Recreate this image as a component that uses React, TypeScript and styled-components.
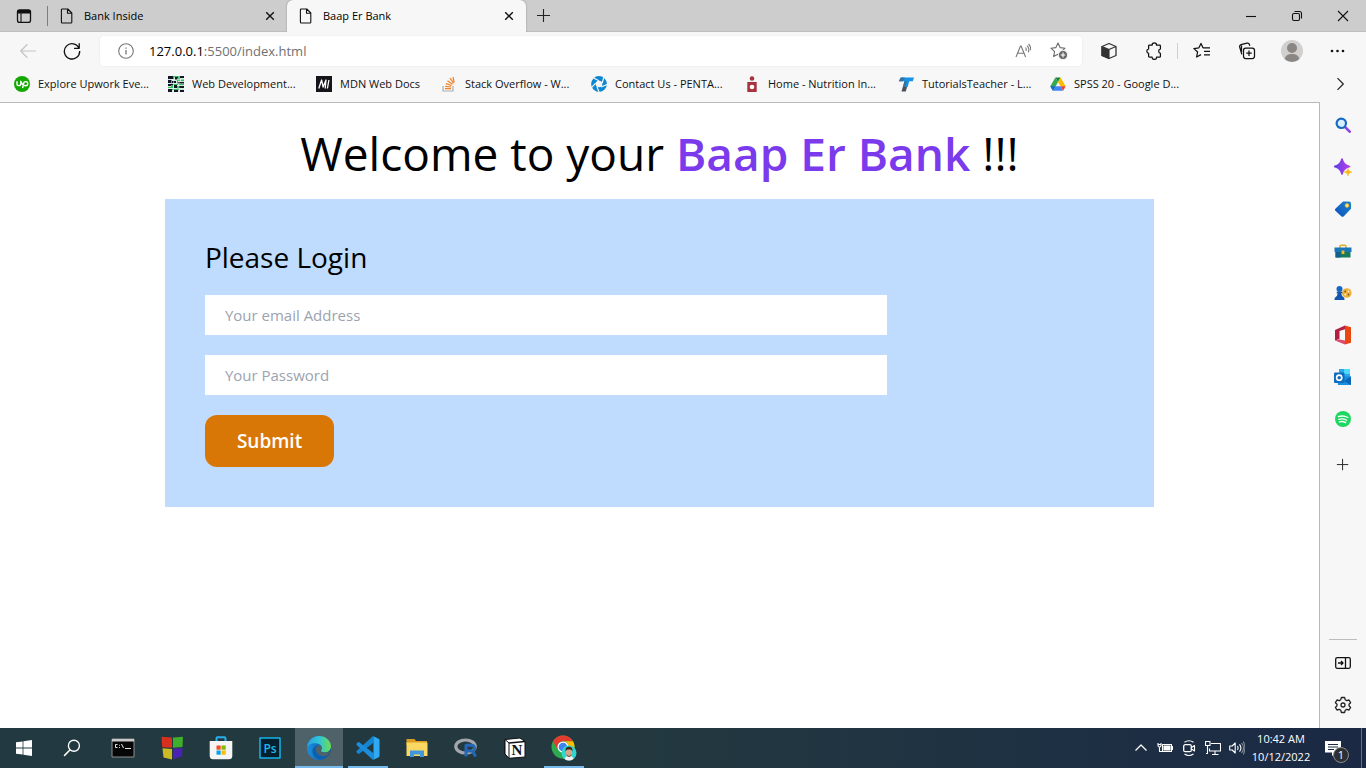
import React, { ReactNode } from "react";
import styled, { createGlobalStyle, css } from "styled-components";

const GlobalStyle = createGlobalStyle`
  *, *::before, *::after { box-sizing: border-box; }
  body {
    margin: 0;
    font-family: "Open Sans", "Noto Sans", sans-serif;
    color: #000;
    background: #fff;
  }
  button, input { font-family: inherit; }
  button { border: 0; padding: 0; background: none; color: inherit; }
  h1, h2, p { margin: 0; font-weight: 400; }
  svg { display: block; flex: none; }
`;

/* ---------- layout ---------- */

const Desktop = styled.div`
  display: flex;
  flex-direction: column;
  min-height: 100vh;
  background: #f7f7f7;
`;

const Body = styled.div`
  display: flex;
  flex: 1;
`;

const Spacer = styled.div`
  flex: 1;
`;

/* ---------- tab strip ---------- */

const TabStrip = styled.header`
  display: flex;
  align-items: stretch;
  height: 32px;
  background: #cdcdcd;
  box-shadow: inset 0 -1px 0 #bdbdbd;
`;

const TabActions = styled.button`
  display: flex;
  align-items: center;
  justify-content: center;
  width: 47px;
`;

const TabDivider = styled.span`
  align-self: center;
  width: 1px;
  height: 20px;
  background: #7d7d7d;
`;

const Tab = styled.div<{ $active?: boolean }>`
  display: flex;
  align-items: center;
  gap: 9px;
  width: 239px;
  padding: 0 9px 0 11px;
  font-size: 11px;
  line-height: 16px;
  ${(p) =>
    p.$active &&
    css`
      background: #f7f7f7;
      border-radius: 6px 6px 0 0;
      box-shadow: 0 0 2px #8a8a8a;
      clip-path: inset(0 -3px 0 -3px);
    `}
`;

const TabTitle = styled.span`
  flex: 1;
  white-space: nowrap;
`;

const IconButton = styled.button<{ $w: number }>`
  display: flex;
  align-items: center;
  justify-content: center;
  flex: none;
  width: ${(p) => p.$w}px;
`;

/* ---------- toolbar ---------- */

const Toolbar = styled.nav`
  display: flex;
  align-items: stretch;
  height: 34px;
  padding: 4px 6px 0;
`;

const AddressBar = styled.div`
  display: flex;
  align-items: center;
  flex: 1;
  margin: 0 5px 0 6px;
  padding: 0 5px 0 18px;
  background: #fff;
  border-radius: 4px;
  box-shadow: 0 0 2px #e2e2e2;
  font-size: 13px;
  line-height: 18px;
`;

const Url = styled.p`
  flex: 1;
  margin-left: 15px;
  color: #717171;
  strong { font-weight: 400; color: #000; }
`;

const ToolbarDivider = styled.span`
  align-self: center;
  width: 1px;
  height: 16px;
  margin: 0 1px;
  background: #cfcfcf;
`;

/* ---------- bookmarks ---------- */

const BookmarksBar = styled.nav`
  display: flex;
  align-items: center;
  height: 36px;
  padding: 0 14px;
`;

const Bookmark = styled.a<{ $w: number }>`
  display: flex;
  align-items: center;
  gap: 8px;
  flex: none;
  width: ${(p) => p.$w}px;
  color: #111;
  font-size: 11px;
  line-height: 16px;
  text-decoration: none;
  white-space: nowrap;
`;

/* ---------- web page ---------- */

const Page = styled.main`
  flex: 1;
  background: #fff;
  border-top: 1px solid #b9b9b9;
  border-right: 1px solid #b9b9b9;
`;

const Welcome = styled.h1`
  padding: 26px 0 22px;
  font-size: 46px;
  line-height: 48px;
  text-align: center;
  strong { font-weight: 600; color: #7c3aed; }
`;

const LoginForm = styled.form`
  display: flex;
  flex-direction: column;
  align-items: flex-start;
  gap: 20px;
  width: 75%;
  margin: 0 auto;
  padding: 40px;
  background: #bfdbfe;
`;

const FormTitle = styled.h2`
  font-size: 28px;
  line-height: 36px;
`;

const Field = styled.input`
  width: 75%;
  height: 40px;
  padding: 0 20px;
  border: 0;
  background: #fff;
  font-size: 15px;
  &::placeholder { color: #9ca3af; opacity: 1; }
`;

const Submit = styled.button`
  padding: 12px 32px;
  border-radius: 12px;
  background: #d97706;
  color: #fff;
  font-size: 19px;
  line-height: 28px;
  font-weight: 600;
`;

/* ---------- sidebar ---------- */

const Sidebar = styled.aside`
  display: flex;
  flex-direction: column;
  width: 46px;
  padding: 2px 0;
`;

const SideButton = styled.button`
  display: flex;
  align-items: center;
  justify-content: center;
  height: 42px;
`;

const SideGap = styled.div`
  height: 4px;
`;

const SideRule = styled.hr`
  width: 28px;
  height: 1px;
  margin: 0 auto 2px;
  border: 0;
  background: #bcbcbc;
`;

/* ---------- taskbar ---------- */

const Taskbar = styled.footer`
  display: flex;
  align-items: stretch;
  height: 40px;
  background: linear-gradient(90deg, #233941 0%, #23393f 45%, #1e3143 75%, #1b2944 100%);
  color: #fff;
`;

const TaskApps = styled.div`
  display: flex;
  gap: 1px;
  margin-left: 3px;
`;

const TaskButton = styled.button<{ $state?: "open" | "focused" }>`
  display: flex;
  align-items: center;
  justify-content: center;
  width: 48px;
  background: ${(p) => (p.$state === "focused" ? "#4f6169" : "transparent")};
  background-image: ${(p) => (p.$state ? "linear-gradient(#76b9ed, #76b9ed)" : "none")};
  background-repeat: no-repeat;
  background-position: center bottom;
  background-size: ${(p) => (p.$state === "focused" ? "48px 2px" : "40px 2px")};
`;

const Clock = styled.time`
  display: flex;
  flex-direction: column;
  align-items: center;
  justify-content: center;
  width: 64px;
  font-size: 11px;
  line-height: 18px;
  white-space: nowrap;
`;

const Notifications = styled.button`
  position: relative;
  display: flex;
  align-items: center;
  justify-content: center;
  width: 48px;
  padding-right: 8px;
  color: #fff;
`;

const Badge = styled.span`
  position: absolute;
  top: 19px;
  left: 20px;
  width: 16px;
  height: 16px;
  border: 1px solid #8c8c8c;
  border-radius: 8px;
  background: #2d2f33;
  font-size: 11px;
  line-height: 14px;
  text-align: center;
`;

const ShowDesktop = styled.button`
  width: 5px;
  border-left: 1px solid #66707f;
`;

/* ---------- icons ---------- */

type IconProps = { size?: number; box?: number; stroke?: string; children: ReactNode };

const Icon = ({ size = 16, box = 16, stroke, children }: IconProps) => (
  <svg
    width={size}
    height={size}
    viewBox={`0 0 ${box} ${box}`}
    fill="none"
    stroke={stroke}
    strokeWidth={stroke ? 1.1 : undefined}
    strokeLinejoin="round"
    aria-hidden="true"
  >
    {children}
  </svg>
);

const PageIcon = () => (
  <Icon stroke="#111">
    <path d="M3.2 1h5.6l4 4v9.2c0 .5-.3.8-.8.8H3.2a.8.8 0 0 1-.8-.8V1.8c0-.5.3-.8.8-.8zM8.5 1v4.3h4.3" />
  </Icon>
);

const CloseIcon = () => (
  <Icon stroke="#111">
    <path d="M4.2 4.2l7.6 7.6M11.8 4.200l-7.600 7.600" strokeWidth="1.4" />
  </Icon>
);

const PlusIcon = ({ size = 16 }: { size?: number }) => (
  <Icon size={size} stroke="#222">
    <path d="M7.5 1v13M1 7.500h13" />
  </Icon>
);

const TabActionsIcon = () => (
  <Icon stroke="#111">
    <rect x="1.5" y="1.8" width="13" height="12.6" rx="2.2" strokeWidth="1.3" />
    <path d="M2 2.6h12v2.400H2z" fill="#111" />
    <path d="M5 5v9" />
  </Icon>
);

const BackIcon = () => (
  <Icon size={18} stroke="#c4c4c4">
    <path d="M15 8H1.5M7.5 2L1.5 8l6 6" />
  </Icon>
);

const ReloadIcon = () => (
  <Icon size={18} stroke="#111">
    <path d="M14.2 5.5A6.8 6.8 0 1 0 14.8 8M14.4 1v4.6H9.8" strokeWidth="1.2" />
  </Icon>
);

const InfoIcon = () => (
  <Icon stroke="#777">
    <circle cx="8" cy="8" r="7.3" />
    <path d="M8 7v4.6M8 4.4v1.3" strokeWidth="1.3" />
  </Icon>
);

const ReadAloudIcon = () => (
  <Icon stroke="#777">
    <path d="M1 14L5.5 3h.6l4.5 11M2.6 10.3H9M10.5 4.5c.9 1 .9 2.4.5 3.4M12 2.6c2 1.8 2.2 4.6 1.2 6.6M13.6 1c1.7 1.8 2.3 4 2 6.2" />
  </Icon>
);

const AddFavoriteIcon = () => (
  <Icon size={18} box={18} stroke="#6a6a6a">
    <path d="M8 1l2.1 4.6 5 .6-3.700 3.400 1 5L8 12.2l-4.4 2.4 1-5L.9 6.200l5-.6z" />
    <circle cx="13" cy="13" r="4.6" fill="#6a6a6a" stroke="#fff" strokeWidth=".8" />
    <path d="M13 10.6v4.800M10.6 13h4.800" stroke="#fff" />
  </Icon>
);

const CubeIcon = () => (
  <Icon size={18} box={18} stroke="#333">
    <path d="M9 1.5l7 3v9L9 16.500l-7-3v-9z" strokeWidth="1.300" />
    <path d="M2 4.500l7 3v9l-7-3z" fill="#333" />
    <path d="M9 7.500l7-3" strokeWidth="1.300" />
  </Icon>
);

const PuzzleIcon = () => (
  <Icon size={18} stroke="#111">
    <path d="M4 2.8h2.300a2 2 0 0 1 4 0H13c.4 0 .7.3.7.7v2.700a2 2 0 0 0 0 3.900v2.600c0 .5-.3.8-.7.8h-2.700a2 2 0 0 1-4 0H4a.8.8 0 0 1-.8-.8v-2.600a2 2 0 0 1 0-3.900V3.500c0-.4.3-.7.8-.7z" />
  </Icon>
);

const FavoritesIcon = () => (
  <Icon size={18} box={18} stroke="#111">
    <path d="M9.8 5.800H15M10 5.800L8 1.500 5.900 5.800l-5 .8 3.700 3.400-1 5L8 12.600M11 9.300h6M11 12.800h6M15 5.800h2" strokeWidth="1.25" />
  </Icon>
);

const CollectionsIcon = () => (
  <Icon size={18} box={18} stroke="#111">
    <rect x="5.500" y="6" width="11" height="10.500" rx="2.2" strokeWidth="1.25" />
    <path d="M11 8.500v5.500M8.300 11.200h5.500M3.800 12.300L1.700 5A2 2 0 0 1 3 2.700l6-1.500a2 2 0 0 1 2.400 1.300l.4 1.200M3.500 3.500v6.500" strokeWidth="1.25" />
  </Icon>
);

const AvatarIcon = () => (
  <Icon size={22} box={22}>
    <circle cx="11" cy="11" r="11" fill="#d2d0ce" />
    <circle cx="11" cy="8" r="5" fill="#8a8683" />
    <path d="M3.6 19c1-4 4-5 7.400-5s6.400 1 7.400 5A11 11 0 0 1 11 22a11 11 0 0 1-7.400-3z" fill="#8a8683" />
  </Icon>
);

const MoreIcon = () => (
  <Icon>
    <g fill="#111">
      <circle cx="3" cy="8" r="1.300" />
      <circle cx="8.500" cy="8" r="1.300" />
      <circle cx="14" cy="8" r="1.300" />
    </g>
  </Icon>
);

const MinimizeIcon = () => (
  <Icon size={10} box={10} stroke="#111">
    <path d="M0 5.5h10" />
  </Icon>
);

const RestoreIcon = () => (
  <Icon size={12} box={12} stroke="#111">
    <rect x="1.5" y="3.5" width="7" height="7" rx="1.5" />
    <path d="M3.5 1.5h5a2 2 0 0 1 2 2v5" />
  </Icon>
);

const WindowCloseIcon = () => (
  <Icon size={12} box={12} stroke="#111">
    <path d="M1 1l10 10M11 1L1 11" />
  </Icon>
);

const UpworkIcon = () => (
  <Icon>
    <circle cx="8" cy="8" r="8" fill="#14a800" />
    <path d="M3 5.3v2.400a1.900 1.900 0 0 0 3.800 0V5.300c.7 2 1.700 3.400 2.700 4.200M8.600 12l1-4.700a2.100 2.100 0 1 1 2 2.500c-1.200 0-2.200-.8-2.900-2" stroke="#fff" strokeWidth="1.4" />
  </Icon>
);

const WebDevIcon = () => (
  <Icon>
    <path d="M0 0h16v16H0z" fill="#cfe9d8" />
    <path d="M0 0h6v3H0zM7 1h3v3H7zM12 0h4v2h-4zM0 4h3v3H0zM4 5h4v2H4zM10 6h6v2h-6zM0 8h5v2H0zM6 9h3v3H6zM11 10h5v2h-5zM0 13h4v3H0zM6 14h4v2H6zM12 14h4v2h-4z" fill="#14142b" />
    <path d="M6 0h6v1H6zM3 4h1v4H3zM9 2h1v6H9zM5 8h5v1H5zM9 10h2v4H9zM0 11h5v1H0zM13 3h3v2h-3zM4 13h7v1H4zM10 0h2v5h-2zM11 8h5v1h-5zM3 9h2v3H3z" fill="#2fbf5b" />
    <path d="M0 3.500h16M0 7.500h16M0 12.500h16M5.500 0v16M11 0v16" stroke="#e7f5ec" strokeWidth=".5" />
  </Icon>
);

const MdnIcon = () => (
  <Icon>
    <path d="M0 0h16v16H0z" fill="#15141a" />
    <path d="M2.800 12.500L5.600 4l1.500 7L10 4l-.8 8.500M12.900 4l-1.500 8.500" stroke="#fff" strokeWidth="1.3" />
  </Icon>
);

const StackOverflowIcon = () => (
  <Icon>
    <path d="M2 10v5h10v-5" stroke="#a9adb0" strokeWidth="1.2" />
    <path d="M4 12.700h6M4.100 10.300l6 .7M4.900 7.600l5.700 1.900M6.500 4.800l5 3.400M9 2.200l3.500 5M12 1l1.200 5.500" stroke="#f48024" strokeWidth="1.2" />
  </Icon>
);

const PentaIcon = () => (
  <Icon>
    <circle cx="8" cy="8" r="5.600" stroke="#0c86d0" strokeWidth="4.6" />
    <path d="M8 4.800L2.500 2M11.300 7.200L13 0M10 11l6-2.500M6 11l2.500 6M4.700 7.200L0 12" stroke="#f7f7f7" strokeWidth="1.2" />
  </Icon>
);

const NutritionIcon = () => (
  <Icon>
    <circle cx="8" cy="2.500" r="2.300" fill="#a8333b" />
    <path d="M3.300 6h9.400v10H3.300z" fill="#a8333b" />
    <circle cx="8" cy="11" r="2.300" fill="#fff" />
  </Icon>
);

const TutorialsIcon = () => (
  <Icon>
    <path d="M6.500 5h4.200L7.800 15.500H3.500z" fill="#4d5258" />
    <path d="M2.800 1.500H16l-1.200 3.800h-3.600L9.700 11H5.200l1.600-5.700H.800z" fill="#1592ea" />
    <path d="M2.800 1.500h4L5 5.300H.800zM6.800 5.300h2L7.200 11h-2z" fill="#3f6f95" />
  </Icon>
);

const DriveIcon = () => (
  <Icon>
    <path d="M5.400 1.500h5.200L8 6z" fill="#188038" />
    <path d="M5.400 1.500L8 6l-4 7.500-1.400 1L.3 10.200z" fill="#34a853" />
    <path d="M10.600 1.500l5.100 8.700h-5.200L8 6z" fill="#fbbc04" />
    <path d="M.3 10.200h5.200l-2.600 4.500z" fill="#1967d2" />
    <path d="M5.500 10.200h5l2.600 4.500H2.900z" fill="#4285f4" />
    <path d="M10.500 10.200h5.200l-2.600 4.500z" fill="#ea4335" />
  </Icon>
);

const ChevronRight = () => (
  <Icon stroke="#222">
    <path d="M5.500 2.200L11.300 8l-5.800 5.800" strokeWidth="1.2" />
  </Icon>
);

const SideSearchIcon = () => (
  <Icon>
    <path d="M10.500 10.500l4.200 4.200" stroke="#9244e8" strokeWidth="2.6" strokeLinecap="round" />
    <circle cx="6.300" cy="6.300" r="4.700" fill="#d7efff" stroke="#1769c4" strokeWidth="2.2" />
  </Icon>
);

const SparkleIcon = () => (
  <Icon size={18} box={18}>
    <defs>
      <linearGradient id="sparkle" x1="0" x2="1">
        <stop stopColor="#5b3fe0" />
        <stop offset="1" stopColor="#b93df0" />
      </linearGradient>
    </defs>
    <path d="M8 1c.8 4 2.700 6.300 7.500 7.500C10.700 9.700 8.800 12 8 16c-.8-4-2.700-6.300-7.500-7.500C5.300 7.300 7.200 5 8 1z" fill="url(#sparkle)" stroke="url(#sparkle)" strokeWidth="1.6" />
    <path d="M14 10.500c.4 2.200 1.300 3 3.700 3.500-2.400.5-3.300 1.300-3.700 3.700-.4-2.400-1.300-3.200-3.700-3.700 2.400-.5 3.300-1.300 3.700-3.500z" fill="#f9b712" stroke="#f9b712" strokeWidth=".7" />
  </Icon>
);

const TagIcon = () => (
  <Icon>
    <defs>
      <linearGradient id="tag" x1="0" x2="1" y1="1" y2="0">
        <stop stopColor="#0f4fc0" />
        <stop offset="1" stopColor="#1a86c9" />
      </linearGradient>
    </defs>
    <path d="M8 .5h6c1.200 0 2 .8 2 2v5.300L8.800 15.300c-.8.7-1.700.7-2.500 0L.6 10c-.8-.8-.8-1.700 0-2.500z" fill="url(#tag)" />
    <circle cx="12" cy="4.500" r="1.900" fill="#ffe69a" stroke="#e8a600" strokeWidth=".7" />
  </Icon>
);

const ToolboxIcon = () => (
  <Icon size={18} box={18}>
    <path d="M6 6V4.500c0-.8.500-1.200 1.200-1.200h3.600c.7 0 1.200.4 1.200 1.200V6" stroke="#e0a92e" strokeWidth="1.5" />
    <path d="M.5 5.500h17V10H.5z" fill="#1976b8" />
    <path d="M1.500 10h15v5.500h-15z" fill="#167a5b" />
    <path d="M1.500 10h5v5.500h-5z" fill="#12608f" />
    <path d="M7.600 8.500h2.800V12H7.600z" fill="#f3b62c" />
  </Icon>
);

const GamesIcon = () => (
  <Icon size={18} box={18}>
    <circle cx="12.800" cy="9" r="4.800" fill="#eeb03a" />
    <circle cx="11.200" cy="7.500" r=".9" fill="#8b5312" />
    <circle cx="14.500" cy="7.500" r=".9" fill="#fff2cc" />
    <circle cx="14.500" cy="10.500" r=".9" fill="#8b5312" />
    <circle cx="11.300" cy="10.500" r=".9" fill="#fff2cc" />
    <circle cx="5.500" cy="5" r="3" fill="#1666c5" />
    <path d="M2.700 7.800h5.600v1.400h-.9c.1 2 .8 3 2.200 4 .7.500.9 1.100.9 2.800H.5c0-1.700.2-2.300.9-2.800 1.400-1 2.100-2 2.200-4h-.9z" fill="#1256ae" />
  </Icon>
);

const OfficeIcon = () => (
  <Icon size={20} box={20}>
    <path d="M12 .5l6 1.800v15.400l-6 1.800z" fill="#e8470f" />
    <path d="M12 .5v3.800L6.500 6v8L2 15.500V5z" fill="#b31f42" />
    <path d="M2 15.500L6.500 14.500l5.500 1v4z" fill="#e0486b" />
  </Icon>
);

const OutlookIcon = () => (
  <Icon size={18} box={18}>
    <path d="M5 1h11v10H5z" fill="#28a8ea" />
    <path d="M10 1h6v5h-6z" fill="#50d9ff" />
    <path d="M3 8l14 .5V17H4z" fill="#1490df" />
    <path d="M17 8.500V17l-7-4z" fill="#0c64b5" />
    <rect x="0" y="4.500" width="10.500" height="10.500" rx="1" fill="#0f6cbd" />
    <circle cx="5.200" cy="9.700" r="2.600" stroke="#fff" strokeWidth="1.6" />
  </Icon>
);

const SpotifyIcon = () => (
  <Icon>
    <circle cx="8" cy="8" r="8" fill="#1ed760" />
    <path d="M3.300 5.600c3.300-1 6.700-.7 9.600.9M3.800 8.300c2.800-.8 5.500-.5 7.900.9M4.300 10.800c2.300-.6 4.400-.4 6.400.8" stroke="#fff" strokeWidth="1.3" strokeLinecap="round" />
  </Icon>
);

const HideSidebarIcon = () => (
  <Icon stroke="#111">
    <rect x=".7" y="2.700" width="14.600" height="10.600" rx="1.500" strokeWidth="1.3" />
    <path d="M10.500 3v10M3 8h5M6 6l2 2-2 2" strokeWidth="1.3" />
  </Icon>
);

const GearIcon = () => (
  <Icon size={18} box={18} stroke="#222">
    <path
      strokeWidth="1.3"
      d="M7.400 1.500h3.200l.6 2.200 1.500.9 2.300-.6 1.600 2.700L15 8.200v1.600l1.600 1.600-1.600 2.600-2.300-.6-1.500.9-.6 2.200H7.400l-.6-2.200-1.500-.9-2.300.6-1.600-2.600L3 9.800V8.200L1.400 6.700 3 4l2.300.6 1.500-.9z"
    />
    <circle cx="9" cy="9" r="2" strokeWidth="1.3" />
  </Icon>
);

const WindowsIcon = () => (
  <Icon>
    <path d="M0 2.300L6.600 1.400v6.200H0zM7.400 1.300L16 0v7.600H7.400zM0 8.400h6.600v6.200L0 13.700zM7.400 8.400H16V16l-8.600-1.300z" fill="#fff" />
  </Icon>
);

const TaskSearchIcon = () => (
  <Icon size={18} stroke="#fff">
    <circle cx="9.700" cy="6" r="4.900" strokeWidth="1.2" />
    <path d="M6.300 9.500L1 15" strokeWidth="1.3" />
  </Icon>
);

const TerminalIcon = () => (
  <Icon size={24} box={24}>
    <rect x="1" y="3" width="22" height="18" fill="#060606" stroke="#8f8f8f" />
    <path d="M1 3h22v2.500H1z" fill="#c9c9c9" />
    <path d="M6.500 8.500H4.500v3h2M8.500 8.800v.9M8.500 11v.9M10.500 8l2 4M14 12.500h6" stroke="#e6e6e6" strokeWidth="1" />
  </Icon>
);

const BlocksIcon = () => (
  <Icon size={24} box={24}>
    <path d="M1.500 .8l10.500.7v10.300l-9.800-.6z" fill="#d7301f" />
    <path d="M13 1.500l10-.8-.5 10.300-9.500.8z" fill="#3fae2a" />
    <path d="M2.500 12.300l9.500.6v10.500l-8.500-1.800z" fill="#cdbb26" />
    <path d="M13 12.800l9.500-.8-.5 8.500-9 2.800z" fill="#4a22b3" />
  </Icon>
);

const StoreIcon = () => (
  <Icon size={24} box={24}>
    <path d="M7.500 5V2.500c0-.8.400-1.200 1.200-1.200h6.600c.8 0 1.200.4 1.200 1.200V5" stroke="#28b0ee" strokeWidth="2" />
    <path d="M.7 5h22.600v15c0 2-1.200 3.300-3.300 3.300H4C1.900 23.300.7 22 .7 20z" fill="#f5f5f5" />
    <path d="M7.500 9.500h4.200v4.200H7.500z" fill="#f25022" />
    <path d="M12.500 9.500h4.200v4.200h-4.200z" fill="#7fba00" />
    <path d="M7.500 14.500h4.200v4.200H7.500z" fill="#00a4ef" />
    <path d="M12.500 14.500h4.200v4.200h-4.200z" fill="#ffb900" />
  </Icon>
);

const PhotoshopIcon = () => (
  <Icon size={22} box={22}>
    <path d="M1 1h20v20H1z" fill="#04202e" stroke="#16b4e8" strokeWidth="1.5" />
    <text x="11" y="15.500" textAnchor="middle" fontSize="12" fontWeight="600" fill="#1bb8ee">
      Ps
    </text>
  </Icon>
);

const EdgeIcon = () => (
  <Icon size={24} box={24}>
    <defs>
      <linearGradient id="edgeTop" x1="0" x2="1">
        <stop stopColor="#2a9fe0" />
        <stop offset=".5" stopColor="#30c5d8" />
        <stop offset="1" stopColor="#6fdc4c" />
      </linearGradient>
      <linearGradient id="edgeLow" x1="0" x2="1">
        <stop stopColor="#1b8fdc" />
        <stop offset="1" stopColor="#0c4f9b" />
      </linearGradient>
    </defs>
    <circle cx="12" cy="12" r="12" fill="url(#edgeLow)" />
    <path d="M.1 11C.8 4.500 6 0 12 0c7 0 12 5 12 10.300 0 3.500-2.600 6.200-6.200 6.200-2.500 0-4-.9-4-1.700 0-.6 1-1.100 1-2.900C14.800 9.500 12 7.300 8.500 7.300 4.300 7.300 1 9 .1 11z" fill="url(#edgeTop)" />
    <path d="M8.700 13.500C8.700 11 10.500 9 12.300 9c1.500.6 2.500 1.700 2.500 2.900 0 1.800-1 2.300-1 2.900 0 .8 1.500 1.700 4 1.700 2.200 0 3.800-.9 4.700-1.800.5 1.600-.8 3.600-2.500 5-6 1.800-11.300-1.700-11.300-6.200z" fill="#4f6169" />
    <path d="M8.700 13.500c0 4.500 5 8 11 6.400-1.500 1.400-3.500 2.800-6 3.600C8 23 5 18.500 5.500 14.500 5.900 11.500 8.500 9 12.300 9c-1.800 0-3.600 2-3.600 4.500z" fill="#0d5fb0" />
  </Icon>
);

const CodeIcon = () => (
  <Icon size={24} box={24}>
    <path d="M17.500 6.800L3.300 17.700c-.4.300-.8.300-1.200 0L.6 16.400c-.4-.4-.4-.9 0-1.300L16.200.8c.4-.4.900-.5 1.300-.5z" fill="#1684cf" />
    <path d="M17.500 17.200L3.300 6.300c-.4-.3-.8-.3-1.200 0L.6 7.600c-.4.4-.4.9 0 1.300l15.600 14.300c.4.400.9.500 1.300.5z" fill="#1b8ddb" />
    <path d="M17.500.3l5 2.400c.6.3 1 .8 1 1.500v15.600c0 .7-.4 1.200-1 1.500l-5 2.400z" fill="#2fabf5" />
  </Icon>
);

const FolderIcon = () => (
  <Icon size={24} box={24}>
    <path d="M1.500 3h8l1.500 2H22v4H1.500z" fill="#dc9d20" />
    <path d="M1.500 6.500h21V20h-21z" fill="#fbd864" />
    <path d="M5 21v-6.500h14V21h-4v-2.500H9V21z" fill="#4197dc" />
  </Icon>
);

const RIcon = () => (
  <Icon size={24} box={24}>
    <ellipse cx="11.500" cy="10.500" rx="9.700" ry="6.500" stroke="#a3a7ad" strokeWidth="3.2" />
    <path d="M12 20.500V9.200h5.200c4.300 0 4.300 5.700.8 5.900 1.200.4 2 2.800 3.700 5.400M12.500 15h5" stroke="#2467b6" strokeWidth="3" />
  </Icon>
);

const NotionIcon = () => (
  <Icon size={22} box={22}>
    <path d="M1 2.500L16 1l5 3.500V20L5 21.300 1 17z" fill="#fff" stroke="#111" />
    <path d="M1 2.500L5 6v15.300L1 17z" fill="#fff" stroke="#111" />
    <path d="M5 6l16-1.500" stroke="#111" strokeWidth="1.5" />
    <text x="13" y="18" textAnchor="middle" fontSize="15" fontWeight="700" fontFamily="Liberation Serif, serif" fill="#111">
      N
    </text>
  </Icon>
);

const ChromeIcon = () => (
  <Icon size={26} box={26}>
    <circle cx="12" cy="12" r="11.500" fill="#2da94f" />
    <path d="M2 6.300A11.500 11.500 0 0 1 22 6.300H12a6 6 0 0 0-5.300 8.500z" fill="#e33b2e" />
    <path d="M22 6.300A11.500 11.500 0 0 1 12 23.500l5.200-8.500A6 6 0 0 0 12 6.300z" fill="#fdbd00" />
    <circle cx="12" cy="12" r="5.500" fill="#fff" />
    <circle cx="12" cy="12" r="4.300" fill="#3f83f1" />
    <circle cx="18" cy="18" r="7.500" fill="#2fd6d0" />
    <path d="M13.500 24c.5-2.500 2.500-3 4.500-3s4 .5 4.500 3a8 8 0 0 1-9 0z" fill="#f1f1f1" />
    <ellipse cx="18" cy="17.500" rx="3.200" ry="4.300" fill="#d6a583" />
    <path d="M14.600 16.500c-.5-3.500 1.200-4.800 3.400-4.800s4 1.300 3.400 4.800c-.7-1.500-1-2-3.400-2s-2.700.5-3.400 2zM15.500 19c.8 2.500 4.200 2.500 5 0-.2 3.500-4.800 3.500-5 0z" fill="#3a2a22" />
  </Icon>
);

const ChevronUp = () => (
  <Icon stroke="#fff">
    <path d="M2.500 10.500L8 5l5.500 5.500" strokeWidth="1.3" />
  </Icon>
);

const BatteryIcon = () => (
  <Icon stroke="#fff">
    <path d="M5.500 4.500h9v7h-9zM14.500 6.500h1v3h-1" />
    <path d="M7 6h6v4H7z" fill="#fff" />
    <path d="M1 3v2.500c0 1.200 1 1.500 1.500 1.500S4 6.700 4 5.500V3M2.500 7v4.500h3M.5 4.500h4" />
  </Icon>
);

const MeetIcon = () => (
  <Icon stroke="#fff">
    <rect x="2.700" y="4.700" width="7.600" height="7" rx="1.500" strokeWidth="1.3" />
    <path d="M10.500 7.500l3-2v5.500l-3-2M3.500 2.200c2.500-1.600 6.500-1.600 9 0M3.500 14c2.500 1.600 6.500 1.600 9 0" />
  </Icon>
);

const NetworkIcon = () => (
  <Icon stroke="#fff">
    <path d="M6 3.500h9.500v7.500H4.500V8.500M10 11v3M7 14.500h6.500M.5 1.500h4.500v4H.5zM2.500 5.500v8H1" />
  </Icon>
);

const SoundIcon = () => (
  <Icon stroke="#fff">
    <path d="M.7 6h2.500l3-3v10l-3-3H.7z" />
    <path d="M8.500 6c.8 1.200.8 2.800 0 4M10.500 4.300c1.700 2.200 1.700 5.200 0 7.400" />
    <path d="M12.500 3c2.500 3 2.500 7 0 10M14.300 1.500c2 4 2 9 0 13" stroke="#7f8a9c" />
  </Icon>
);

const MessageIcon = () => (
  <Icon size={18} box={18}>
    <path d="M1 2h16v11.500h-5L8 17v-3.500H1z" fill="#fff" />
    <path d="M4 5.500h10M4 8h10M4 10.500h6" stroke="#1b2944" />
  </Icon>
);

/* ---------- data ---------- */

const bookmarks = [
  { label: "Explore Upwork Eve...", width: 154, icon: <UpworkIcon /> },
  { label: "Web Development...", width: 148, icon: <WebDevIcon /> },
  { label: "MDN Web Docs", width: 125, icon: <MdnIcon /> },
  { label: "Stack Overflow - W...", width: 150, icon: <StackOverflowIcon /> },
  { label: "Contact Us - PENTA...", width: 153, icon: <PentaIcon /> },
  { label: "Home - Nutrition In...", width: 154, icon: <NutritionIcon /> },
  { label: "TutorialsTeacher - L...", width: 152, icon: <TutorialsIcon /> },
  { label: "SPSS 20 - Google D...", width: 154, icon: <DriveIcon /> },
];

const sideApps = [
  { label: "Search", icon: <SideSearchIcon /> },
  { label: "Discover", icon: <SparkleIcon /> },
  { label: "Shopping", icon: <TagIcon /> },
  { label: "Tools", icon: <ToolboxIcon /> },
  { label: "Games", icon: <GamesIcon /> },
  { label: "Office", icon: <OfficeIcon /> },
  { label: "Outlook", icon: <OutlookIcon /> },
  { label: "Spotify", icon: <SpotifyIcon /> },
];

const taskApps: { label: string; icon: ReactNode; state?: "open" | "focused" }[] = [
  { label: "Command Prompt", icon: <TerminalIcon /> },
  { label: "Blocks", icon: <BlocksIcon /> },
  { label: "Microsoft Store", icon: <StoreIcon /> },
  { label: "Photoshop", icon: <PhotoshopIcon /> },
  { label: "Microsoft Edge", icon: <EdgeIcon />, state: "focused" },
  { label: "Visual Studio Code", icon: <CodeIcon />, state: "open" },
  { label: "File Explorer", icon: <FolderIcon /> },
  { label: "R", icon: <RIcon /> },
  { label: "Notion", icon: <NotionIcon /> },
  { label: "Google Chrome", icon: <ChromeIcon />, state: "open" },
];

const tray = [
  { label: "Show hidden icons", icon: <ChevronUp /> },
  { label: "Battery", icon: <BatteryIcon /> },
  { label: "Meet Now", icon: <MeetIcon /> },
  { label: "Network", icon: <NetworkIcon /> },
  { label: "Volume", icon: <SoundIcon /> },
];

/* ---------- app ---------- */

export default function App() {
  return (
    <Desktop>
      <GlobalStyle />
      <TabStrip>
        <TabActions aria-label="Tab actions"><TabActionsIcon /></TabActions>
        <TabDivider />
        <Tab>
          <PageIcon />
          <TabTitle>Bank Inside</TabTitle>
          <IconButton $w={16} aria-label="Close Bank Inside"><CloseIcon /></IconButton>
        </Tab>
        <Tab $active>
          <PageIcon />
          <TabTitle>Baap Er Bank</TabTitle>
          <IconButton $w={16} aria-label="Close Baap Er Bank"><CloseIcon /></IconButton>
        </Tab>
        <IconButton $w={36} aria-label="New tab"><PlusIcon /></IconButton>
        <Spacer />
        <IconButton $w={46} aria-label="Minimize"><MinimizeIcon /></IconButton>
        <IconButton $w={46} aria-label="Restore"><RestoreIcon /></IconButton>
        <IconButton $w={46} aria-label="Close window"><WindowCloseIcon /></IconButton>
      </TabStrip>

      <Toolbar aria-label="Browser toolbar">
        <IconButton $w={44} aria-label="Back"><BackIcon /></IconButton>
        <IconButton $w={44} aria-label="Reload"><ReloadIcon /></IconButton>
        <AddressBar>
          <InfoIcon />
          <Url><strong>127.0.0.1</strong>:5500/index.html</Url>
          <IconButton $w={36} aria-label="Read aloud"><ReadAloudIcon /></IconButton>
          <IconButton $w={36} aria-label="Add to favorites"><AddFavoriteIcon /></IconButton>
        </AddressBar>
        <IconButton $w={44} aria-label="3D viewer"><CubeIcon /></IconButton>
        <IconButton $w={45} aria-label="Extensions"><PuzzleIcon /></IconButton>
        <ToolbarDivider />
        <IconButton $w={45} aria-label="Favorites"><FavoritesIcon /></IconButton>
        <IconButton $w={45} aria-label="Collections"><CollectionsIcon /></IconButton>
        <IconButton $w={45} aria-label="Profile"><AvatarIcon /></IconButton>
        <IconButton $w={46} aria-label="Settings and more"><MoreIcon /></IconButton>
      </Toolbar>

      <BookmarksBar aria-label="Favorites bar">
        {bookmarks.map((b) => (
          <Bookmark key={b.label} href="#" $w={b.width}>
            {b.icon}
            {b.label}
          </Bookmark>
        ))}
        <Spacer />
        <IconButton $w={24} aria-label="More favorites"><ChevronRight /></IconButton>
      </BookmarksBar>

      <Body>
        <Page>
          <Welcome>
            Welcome to your <strong>Baap Er Bank</strong> !!!
          </Welcome>
          <LoginForm onSubmit={(e) => e.preventDefault()}>
            <FormTitle>Please Login</FormTitle>
            <Field type="email" placeholder="Your email Address" aria-label="Your email Address" />
            <Field type="password" placeholder="Your Password" aria-label="Your Password" />
            <Submit type="submit">Submit</Submit>
          </LoginForm>
        </Page>
        <Sidebar>
          {sideApps.map((a) => (
            <SideButton key={a.label} aria-label={a.label}>{a.icon}</SideButton>
          ))}
          <SideGap />
          <SideButton aria-label="Add to sidebar"><PlusIcon size={14} /></SideButton>
          <Spacer />
          <SideRule />
          <SideButton aria-label="Hide sidebar"><HideSidebarIcon /></SideButton>
          <SideButton aria-label="Sidebar settings"><GearIcon /></SideButton>
        </Sidebar>
      </Body>

      <Taskbar>
        <TaskButton aria-label="Start"><WindowsIcon /></TaskButton>
        <TaskButton aria-label="Search Windows"><TaskSearchIcon /></TaskButton>
        <TaskApps>
          {taskApps.map((a) => (
            <TaskButton key={a.label} $state={a.state} aria-label={a.label}>{a.icon}</TaskButton>
          ))}
        </TaskApps>
        <Spacer />
        {tray.map((t) => (
          <IconButton key={t.label} $w={24} aria-label={t.label}>{t.icon}</IconButton>
        ))}
        <Clock>
          <span>10:42 AM</span>
          <span>10/12/2022</span>
        </Clock>
        <Notifications aria-label="Notifications">
          <MessageIcon />
          <Badge>1</Badge>
        </Notifications>
        <ShowDesktop aria-label="Show desktop" />
      </Taskbar>
    </Desktop>
  );
}
